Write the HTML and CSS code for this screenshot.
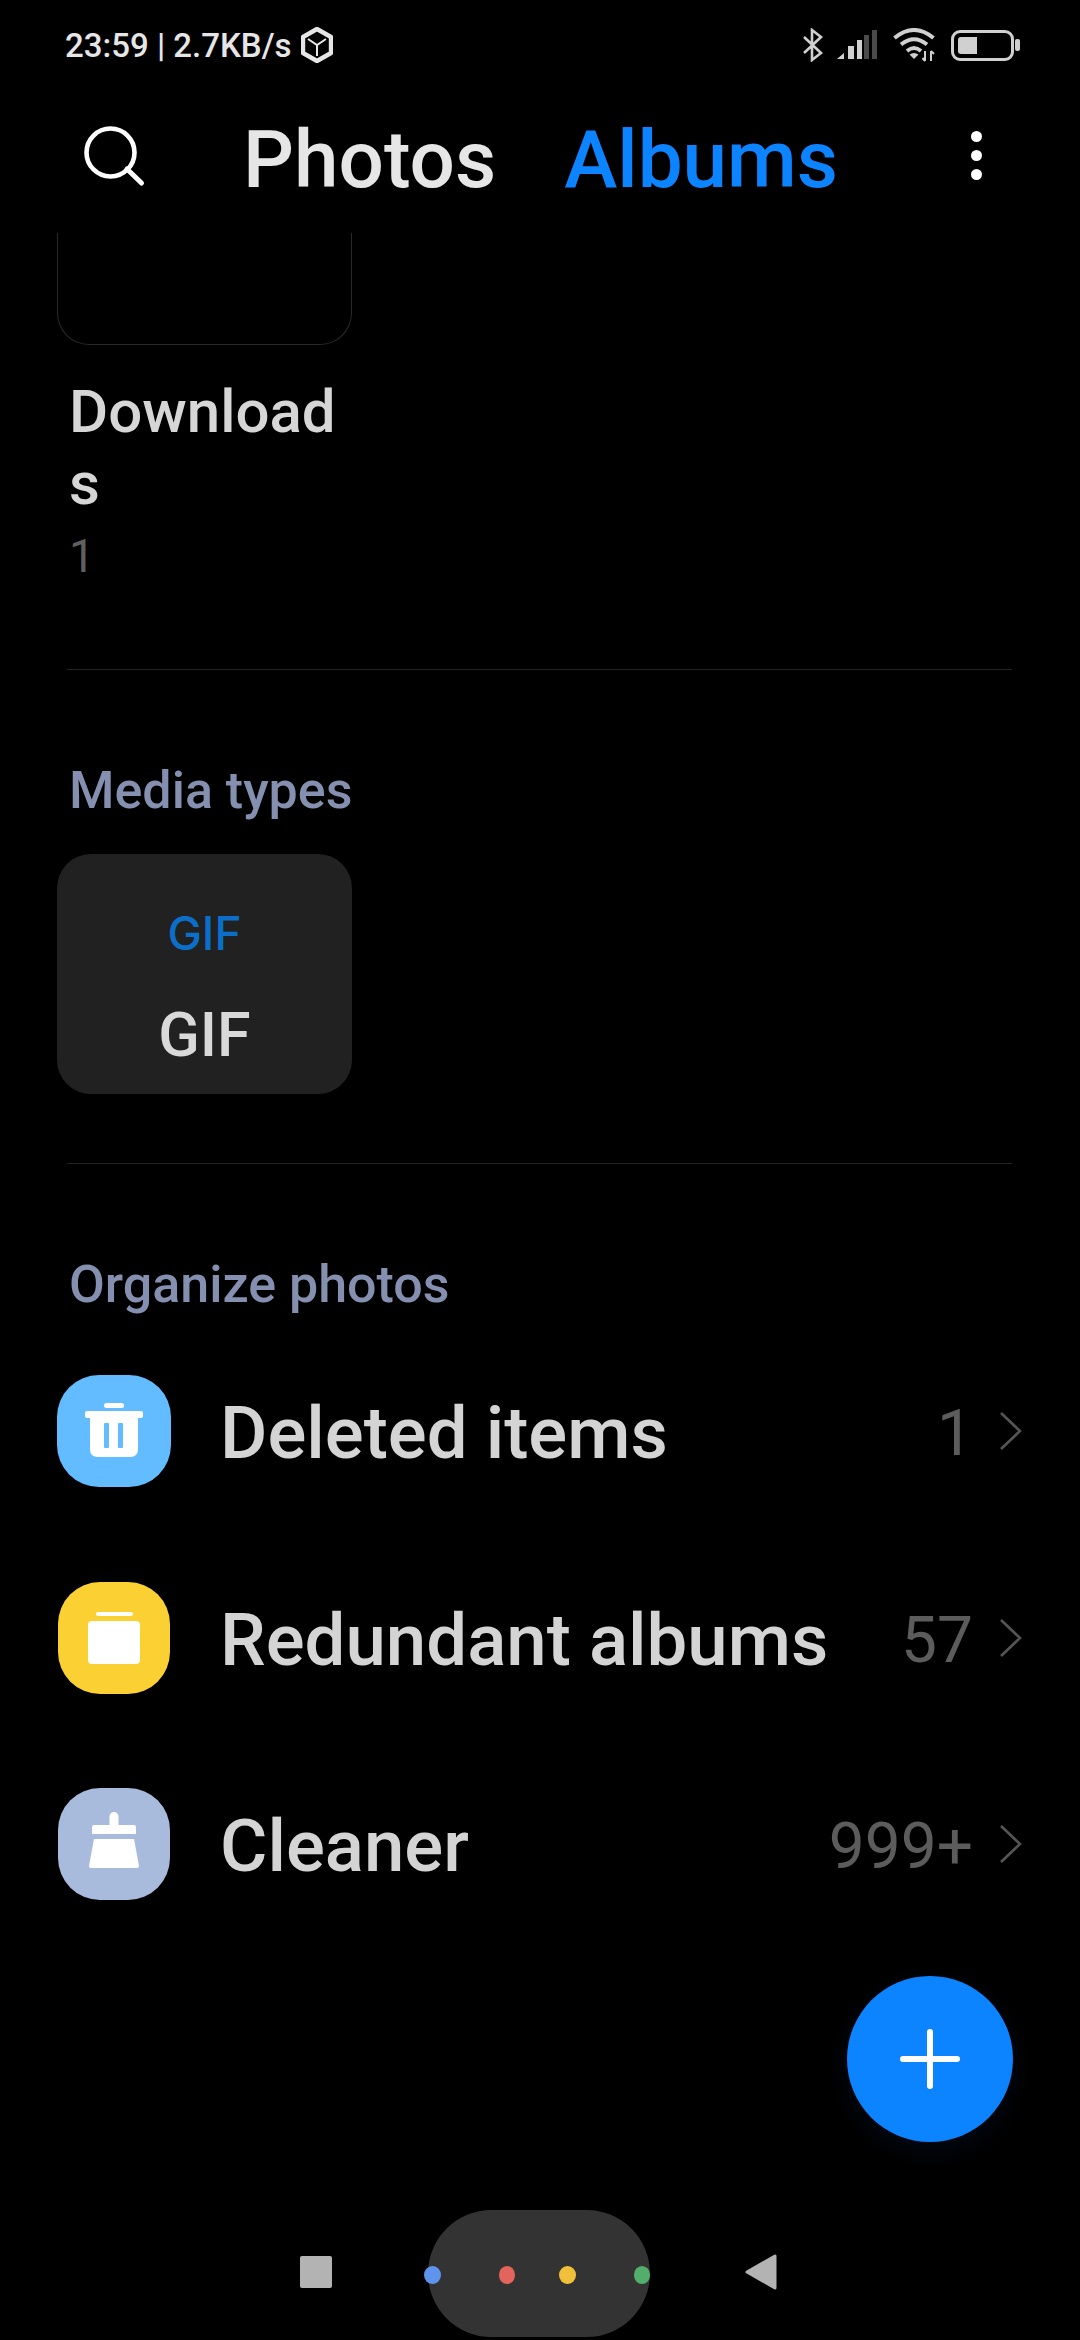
FILE: index.html
```html
<!DOCTYPE html>
<html lang="en">
<head>
    <meta charset="UTF-8">
    <title>Albums</title>
    <link rel="stylesheet" href="styles.css">
</head>
<body>
    <div class="screen">
        <div class="status-bar">
            <div class="status-left">
                <span class="status-text">23:59 | 2.7KB/s</span>
                <svg class="box-icon" width="32" height="36" viewBox="0 0 32 36">
                    <path d="M16 2 L30 10 V26 L16 34 L2 26 V10 Z" fill="none" stroke="#e6e6e6" stroke-width="4.4" stroke-linejoin="round"/>
                    <path d="M7 12 L16 18 L25 12 M16 18 V29" fill="none" stroke="#e6e6e6" stroke-width="2"/>
                </svg>
            </div>
            <div class="status-right">
                <svg width="21" height="34" viewBox="0 0 21 34">
                    <path d="M2 9 L19 25 L10 32 V2 L19 9 L2 25" fill="none" stroke="#d0d0d0" stroke-width="2.6"/>
                </svg>
                <svg class="signal" width="40" height="30" viewBox="0 0 40 30">
                    <path d="M0 29 L7 23 V29 Z" fill="#d0d0d0"/>
                    <rect x="11" y="16" width="6" height="13" fill="#d0d0d0"/>
                    <rect x="20" y="10" width="5" height="19" fill="#d0d0d0"/>
                    <rect x="27" y="5" width="5" height="24" fill="#4a4a4a"/>
                    <rect x="35" y="0" width="5" height="29" fill="#4a4a4a"/>
                </svg>
                <svg class="wifi" width="42" height="34" viewBox="0 0 42 34">
                    <path d="M1.5 10 Q21 -6 40.5 10 M8 16.5 Q21 6 34 16.5 M14 23 Q21 17 28 23" fill="none" stroke="#d0d0d0" stroke-width="4"/>
                    <path d="M16.5 26.5 Q21 23.5 25.5 26.5 L21 31 Z" fill="#d0d0d0"/>
                    <path d="M32 23 V33 M29.5 30 L32 33 M38 33 V23 M38 23 L41 26" fill="none" stroke="#d0d0d0" stroke-width="2"/>
                </svg>
                <div class="battery">
                    <div class="battery-body"><div class="battery-level"></div></div>
                    <div class="battery-nub"></div>
                </div>
            </div>
        </div>

        <div class="header">
            <svg class="search-icon" width="62" height="62" viewBox="0 0 62 62">
                <circle cx="26.5" cy="26.5" r="24" fill="none" stroke="#fff" stroke-width="4.6"/>
                <path d="M43 43 L57.5 57" stroke="#fff" stroke-width="5" stroke-linecap="round"/>
            </svg>
            <span class="tab">Photos</span>
            <span class="tab tab-active">Albums</span>
            <div class="more-icon"><i></i><i></i><i></i></div>
        </div>

        <div class="content">
            <div class="album-thumb"></div>
            <div class="album-name">Downloads</div>
            <div class="album-count">1</div>
            <div class="divider first"></div>

            <div class="section-title">Media types</div>
            <div class="type-card">
                <span class="type-logo">GIF</span>
                <span class="type-name">GIF</span>
            </div>
            <div class="divider second"></div>

            <div class="section-title organize">Organize photos</div>
            <div class="row">
                <div class="row-icon blue">
                    <svg width="58" height="56" viewBox="0 0 58 56">
                        <rect x="19" y="0" width="20" height="5" rx="2.5" fill="#fff"/>
                        <rect x="0" y="8" width="58" height="7" rx="2" fill="#fff"/>
                        <path d="M5 15 H53 V46 Q53 54 45 54 H13 Q5 54 5 46 Z" fill="#fff"/>
                        <rect x="19" y="20" width="5" height="25" rx="1" fill="#62bcff"/>
                        <rect x="33" y="20" width="5" height="25" rx="1" fill="#62bcff"/>
                    </svg>
                </div>
                <span class="row-label">Deleted items</span>
                <span class="row-count">1</span>
                <svg class="chevron" width="24" height="40" viewBox="0 0 24 40"><path d="M2 2 L21 20 L2 38" fill="none" stroke="#555" stroke-width="2.6"/></svg>
            </div>
            <div class="row">
                <div class="row-icon yellow">
                    <svg width="52" height="52" viewBox="0 0 52 52">
                        <rect x="8" y="0" width="37" height="4" rx="2" fill="#fff"/>
                        <rect x="0" y="9" width="52" height="43" rx="4" fill="#fff"/>
                    </svg>
                </div>
                <span class="row-label">Redundant albums</span>
                <span class="row-count">57</span>
                <svg class="chevron" width="24" height="40" viewBox="0 0 24 40"><path d="M2 2 L21 20 L2 38" fill="none" stroke="#555" stroke-width="2.6"/></svg>
            </div>
            <div class="row">
                <div class="row-icon slate">
                    <svg class="broom" width="50" height="56" viewBox="0 0 50 56">
                        <path d="M20.5 13 V4.5 A4.5 4.5 0 0 1 29.5 4.5 V13 H45 Q47 13 47 15 V22 H3 V15 Q3 13 5 13 Z" fill="#fff"/>
                        <path d="M5 27 H45 L50 54 Q50 56 48 56 H2 Q0 56 0 54 Z" fill="#fff"/>
                    </svg>
                </div>
                <span class="row-label">Cleaner</span>
                <span class="row-count">999+</span>
                <svg class="chevron" width="24" height="40" viewBox="0 0 24 40"><path d="M2 2 L21 20 L2 38" fill="none" stroke="#555" stroke-width="2.6"/></svg>
            </div>

            <div class="fab">
                <svg width="60" height="60" viewBox="0 0 60 60"><path d="M30 3 V57 M3 30 H57" stroke="#fff" stroke-width="6" stroke-linecap="round"/></svg>
            </div>
        </div>

        <div class="nav-bar">
            <div class="nav-square"></div>
            <div class="nav-pill">
                <i class="dot dot-blue"></i>
                <i class="dot dot-red"></i>
                <i class="dot dot-yellow"></i>
                <i class="dot dot-green"></i>
            </div>
            <svg class="nav-back" width="32" height="36" viewBox="0 0 32 36"><path d="M2 18 L30 2 V34 Z" fill="#b3b3b3" stroke="#b3b3b3" stroke-width="3" stroke-linejoin="round"/></svg>
        </div>
    </div>
</body>
</html>
```

FILE: styles.css
```css
* {
    box-sizing: border-box;
}
html, body {
    margin: 0;
    padding: 0;
    background-color: #000;
}
.screen {
    width: 1080px;
    height: 2340px;
    display: flex;
    flex-direction: column;
    overflow: hidden;
    font-family: Roboto, "Liberation Sans", sans-serif;
    background-color: #000;
}

/* status bar */
.status-bar {
    height: 90px;
    flex: none;
    display: flex;
    align-items: center;
    justify-content: space-between;
    padding: 0 60px 0 65px;
}
.status-left, .status-right {
    display: flex;
    align-items: center;
}
.status-text {
    font-size: 33px;
    font-weight: 500;
    color: #e6e6e6;
    white-space: nowrap;
}
.box-icon {
    margin-left: 9px;
}
.signal {
    margin-left: 14px;
}
.wifi {
    margin-left: 16px;
}
.battery {
    display: flex;
    align-items: center;
    margin-left: 16px;
}
.battery-body {
    width: 63px;
    height: 31px;
    border: 3px solid #d0d0d0;
    border-radius: 9px;
    padding: 4px;
}
.battery-level {
    width: 19px;
    height: 100%;
    background-color: #d0d0d0;
    border-radius: 3px 0 0 3px;
}
.battery-nub {
    width: 5px;
    height: 12px;
    margin-left: 1px;
    background-color: #d0d0d0;
    border-radius: 2px;
}

/* header */
.header {
    height: 143px;
    flex: none;
    display: flex;
    align-items: center;
    position: relative;
    padding-left: 84px;
}
.search-icon {
    margin-top: -9px;
}
.tab {
    font-size: 80px;
    font-weight: 500;
    color: #e6e6e6;
    margin-left: 97px;
    margin-top: -3px;
}
.tab-active {
    color: #0d84ff;
    margin-left: 68px;
}
.more-icon {
    margin-left: auto;
    margin-right: 98px;
    margin-top: -13px;
    display: flex;
    flex-direction: column;
    gap: 8px;
}
.more-icon i {
    display: block;
    width: 11px;
    height: 11px;
    border-radius: 50%;
    background-color: #fff;
}

/* scrolling list */
.content {
    flex: 1;
    position: relative;
}
.album-thumb {
    width: 295px;
    height: 112px;
    margin-left: 57px;
    border: 1px solid #2a2a2a;
    border-top: none;
    border-radius: 0 0 32px 32px;
}
.album-name {
    width: 280px;
    margin: 31px 0 0 69px;
    font-size: 60px;
    line-height: 72px;
    font-weight: 500;
    color: #d6d6d6;
    word-break: break-all;
}
.album-count {
    margin-left: 69px;
    font-size: 46px;
    line-height: 72px;
    color: #606060;
}
.divider {
    height: 1px;
    margin: 0 68px 0 67px;
    background-color: #222;
}
.divider.first {
    margin-top: 77px;
}
.divider.second {
    margin-top: 69px;
}
.section-title {
    margin: 91px 0 0 69px;
    font-size: 52px;
    line-height: 60px;
    font-weight: 500;
    color: #858fb0;
}
.type-card {
    width: 295px;
    height: 240px;
    margin: 33px 0 0 57px;
    display: flex;
    flex-direction: column;
    align-items: center;
    border-radius: 34px;
    background-color: #212121;
}
.type-logo {
    margin-top: 53px;
    font-family: Inter, Roboto, sans-serif;
    font-size: 46px;
    line-height: 52px;
    font-weight: 500;
    color: #0b6fc9;
}
.type-name {
    margin-top: 40px;
    font-size: 61px;
    line-height: 72px;
    font-weight: 500;
    color: #d9d9d9;
}
.row {
    height: 206.5px;
    display: flex;
    align-items: center;
    padding: 0 57px 0 57px;
}
.section-title.organize + .row {
    margin-top: 13px;
}
.row-icon {
    width: 114px;
    height: 112px;
    flex: none;
    display: flex;
    align-items: center;
    justify-content: center;
    border-radius: 42px;
}
.row-icon.blue {
    background-color: #62bcff;
}
.row-icon.yellow {
    background-color: #fbd032;
    width: 112px;
    margin: 0 1px;
}
.row-icon.slate {
    background-color: #a9bbdd;
    width: 112px;
    margin: 0 1px;
}
.broom {
    margin-bottom: 8px;
}
.row-label {
    margin-left: 49px;
    margin-top: 5px;
    font-size: 72.6px;
    font-weight: 500;
    color: #d4d4d4;
    white-space: nowrap;
}
.row-count {
    margin-left: auto;
    margin-top: 5px;
    font-size: 64px;
    color: #5c5c5c;
}
.chevron {
    margin-left: 26px;
    flex: none;
}
.fab {
    position: absolute;
    left: 847px;
    top: 1743px;
    width: 166px;
    height: 166px;
    display: flex;
    align-items: center;
    justify-content: center;
    border-radius: 50%;
    background-color: #0d84ff;
    box-shadow: 0 8px 24px rgba(13, 132, 255, 0.08);
}

/* nav bar */
.nav-bar {
    height: 130px;
    flex: none;
    display: flex;
    align-items: center;
    padding: 0 0 0 300px;
}
.nav-square {
    width: 32px;
    height: 32px;
    margin-top: -6px;
    border-radius: 2px;
    background-color: #b3b3b3;
}
.nav-pill {
    width: 222px;
    height: 127px;
    margin-left: 96px;
    border-radius: 64px;
    background-color: #333;
    display: flex;
    align-items: center;
    margin-top: -3px;
    position: relative;
}
.dot {
    display: block;
    width: 18px;
    height: 18px;
    border-radius: 50%;
    margin-top: 3px;
}
.dot-blue {
    background-color: #5f94ee;
    margin-left: -4px;
}
.dot-red {
    background-color: #e2645c;
    margin-left: 58px;
}
.dot-yellow {
    background-color: #f1c03a;
    margin-left: 44px;
}
.dot-green {
    background-color: #53ae6c;
    margin-left: 58px;
}
.nav-back {
    margin-left: 95px;
    margin-top: -6px;
}
```
